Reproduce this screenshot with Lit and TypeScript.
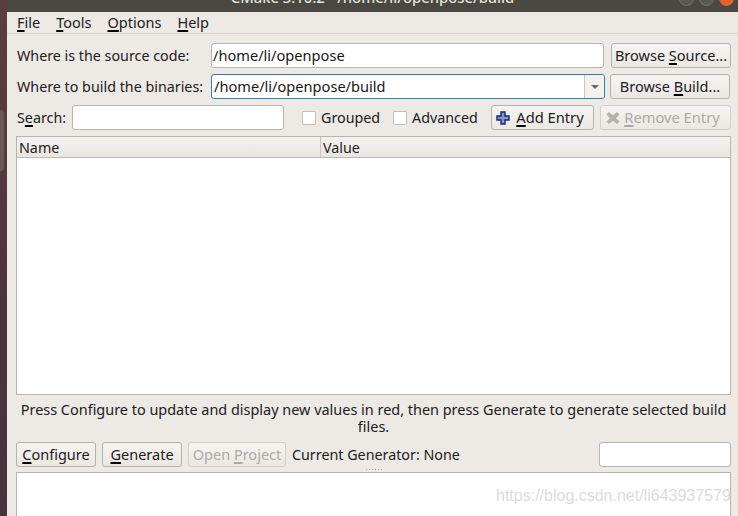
import { LitElement, html, css } from "lit";
import { customElement } from "lit/decorators.js";

@customElement("app-root")
export class AppRoot extends LitElement {
  static styles = css`
    :host {
      display: flex;
      width: 738px;
      height: 516px;
      overflow: hidden;
      font-family: "Noto Sans", "DejaVu Sans", sans-serif;
      font-size: 14.3px;
      color: #22201d;
      position: relative;
      background: #ede9e4;
    }
    .strip {
      width: 7px;
      flex: none;
      background: linear-gradient(#5c3d40 0, #54393e 170px, #4a353a 300px, #47343c 100%);
    }
    .strip div {
      width: 4px;
      height: 61px;
      margin-top: 110px;
      background: #6b5658;
      border-radius: 0 3px 3px 0;
    }
    .win {
      flex: 1;
      min-width: 0;
      display: flex;
      flex-direction: column;
      background: #ede9e4;
    }
    .title {
      height: 12px;
      flex: none;
      background: #4a4842;
      color: #e4e1dc;
      font-weight: 500;
      font-size: 14.8px;
      overflow: hidden;
      position: relative;
      text-align: center;
      line-height: 20px;
    }
    .title span {
      display: block;
      margin-top: -13px;
    }
    .wbtns {
      position: absolute;
      right: 4px;
      top: -9px;
      display: flex;
      gap: 5px;
    }
    .wbtns i {
      box-sizing: border-box;
      width: 15px;
      height: 15px;
      border-radius: 50%;
      background: #5a5853;
      border: 1px solid #75736e;
      display: block;
    }
    .wbtns i.close {
      background: #e0622d;
      border-color: #e0622d;
    }
    .menu {
      flex: none;
      display: flex;
      align-items: center;
      gap: 16px;
      padding: 0 0 2px 10px;
      box-sizing: content-box;
      height: 19px;
      font-size: 14.5px;
      border-bottom: 1px solid #d5d1cb;
    }
    u {
      text-decoration-thickness: 2px;
      text-underline-offset: 2px;
      text-decoration-skip-ink: none;
      text-decoration-color: #000;
    }
    .body {
      flex: 1;
      min-height: 0;
      display: flex;
      flex-direction: column;
      padding: 9px 7px 0 9px;
    }
    .row {
      display: flex;
      align-items: center;
      height: 25px;
      flex: none;
    }
    .r1 {
      margin-bottom: 6px;
    }
    .r2 {
      margin-bottom: 6px;
    }
    .t {
      white-space: nowrap;
      flex: none;
      padding-bottom: 1px;
    }
    .lbl {
      width: 195px;
      padding-left: 1px;
      box-sizing: border-box;
    }
    .input {
      box-sizing: border-box;
      height: 25px;
      background: #fff;
      border: 1px solid #b8b4ae;
      border-radius: 3px;
      display: flex;
      align-items: center;
      padding-left: 1px;
      color: #1a1917;
      font-size: 14.6px;
      white-space: nowrap;
    }
    .input span {
      padding-bottom: 1px;
    }
    .grow {
      flex: 1;
      min-width: 0;
    }
    .focus {
      border-color: #2f7fb0;
      padding-left: 2px;
    }
    .input .arrow {
      margin-left: auto;
      padding: 0;
      width: 19px;
      height: 100%;
      flex: none;
      border-left: 1px solid #c9c5bf;
      background: #f3f1ee;
      display: flex;
      align-items: center;
      justify-content: center;
      border-radius: 0 2px 2px 0;
    }
    .arrow::after {
      content: "";
      border-left: 4px solid transparent;
      border-right: 4px solid transparent;
      border-top: 4px solid #6c6a66;
    }
    .btn {
      box-sizing: border-box;
      height: 25px;
      flex: none;
      border: 1px solid #b5b1ab;
      border-radius: 3px;
      background: linear-gradient(#f6f4f2, #ebe8e3);
      display: flex;
      align-items: center;
      justify-content: center;
      gap: 5px;
      color: #22201d;
      font-size: 14.5px;
      white-space: nowrap;
    }
    .btn span {
      padding-bottom: 1px;
    }
    .btn.off {
      color: #adaaa5;
      border-color: #d2cec8;
    }
    .btn.off u {
      text-decoration-color: #adaaa5;
    }
    .w120 {
      width: 120px;
    }
    .w80 {
      width: 80px;
      margin-right: 6px;
    }
    .check {
      width: 14px;
      height: 14px;
      box-sizing: border-box;
      background: #fff;
      border: 1px solid #c2beb8;
      border-radius: 1px;
      flex: none;
      margin-right: 5px;
    }
    .table {
      box-sizing: border-box;
      height: 259px;
      margin-top: 6px;
      flex: none;
      background: #fff;
      border: 1px solid #b8b4ae;
      display: flex;
      flex-direction: column;
    }
    .thead {
      height: 20px;
      flex: none;
      display: flex;
      background: linear-gradient(#f4f2f0, #e9e6e1);
      border-bottom: 1px solid #bdb9b3;
    }
    .th {
      padding-left: 2px;
      line-height: 21px;
    }
    .th.name {
      width: 301px;
      border-right: 1px solid #c9c5bf;
    }
    .note {
      flex: none;
      height: 47px;
      box-sizing: border-box;
      padding-top: 6px;
      text-align: center;
      line-height: 17px;
      font-size: 14.45px;
    }
    .output {
      box-sizing: border-box;
      height: 60px;
      flex: none;
      background: #fff;
      border: 1px solid #b8b4ae;
      margin-top: 5px;
    }
    .grip {
      position: absolute;
      left: 366px;
      top: 469px;
      width: 17px;
      height: 1px;
      background: repeating-linear-gradient(90deg, #b5b1ab 0 1px, transparent 1px 3px);
    }
    .mark {
      position: absolute;
      left: 496px;
      top: 487px;
      font-family: "Liberation Sans", sans-serif;
      font-size: 16px;
      color: #dcdcdc;
      white-space: nowrap;
    }
    .m7 { margin-right: 7px; }
    .m5 { margin-right: 5px; }
    .m1 { margin-right: 1px; }
    .search { width: 56px; padding-left: 1px; box-sizing: border-box; }
    .sinput { width: 212px; margin-right: 18px; }
    .grouped { width: 72px; }
    .advanced { width: 79px; }
    .add { width: 103px; margin-right: 6px; font-size: 14.7px; gap: 6px; padding-right: 5px; }
    .remove { width: 131px; font-size: 14.7px; gap: 4px; padding-right: 5px; }
    .open { width: 98px; margin-right: 6px; }
    .gen-input { width: 132px; margin-left: auto; }
  `;

  render() {
    return html`
      <div class="strip"><div></div></div>
      <div class="win">
        <div class="title">
          <span>CMake 3.10.2 - /home/li/openpose/build</span>
          <div class="wbtns"><i></i><i></i><i class="close"></i></div>
        </div>
        <div class="menu">
          <span><u>F</u>ile</span><span><u>T</u>ools</span><span><u>O</u>ptions</span><span><u>H</u>elp</span>
        </div>
        <div class="body">
          <div class="row r1">
            <span class="t lbl">Where is the source code:</span>
            <div class="input grow m7"><span>/home/li/openpose</span></div>
            <div class="btn w120"><span>Browse <u>S</u>ource...</span></div>
          </div>
          <div class="row r2">
            <span class="t lbl">Where to build the binaries:</span>
            <div class="input grow focus m5">
              <span>/home/li/openpose/build</span>
              <span class="arrow"></span>
            </div>
            <div class="btn w120 m1"><span>Browse <u>B</u>uild...</span></div>
          </div>
          <div class="row">
            <span class="t search">S<u>e</u>arch:</span>
            <div class="input sinput"></div>
            <span class="check"></span>
            <span class="t grouped">Grouped</span>
            <span class="check"></span>
            <span class="t advanced">Advanced</span>
            <div class="btn add">
              <svg width="14" height="14" viewBox="0 0 14 14">
                <path d="M5 1h4v4h4v4H9v4H5V9H1V5h4z" fill="#7f96d6" stroke="#16266e" stroke-width="1.400"></path>
              </svg>
              <span><u>A</u>dd Entry</span>
            </div>
            <div class="btn off remove">
              <svg width="14" height="14" viewBox="0 0 14 14">
                <path d="M3 1l4 3.200L11 1l2.500 2.500L10 7l3.500 3.500L11 13 7 9.800 3 13 .5 10.500 4 7 .5 3.500z" fill="#b5b2ad"></path>
              </svg>
              <span><u>R</u>emove Entry</span>
            </div>
          </div>
          <div class="table">
            <div class="thead">
              <div class="th name">Name</div>
              <div class="th">Value</div>
            </div>
          </div>
          <div class="note">Press Configure to update and display new values in red, then press Generate to generate selected build files.</div>
          <div class="row">
            <div class="btn w80"><span><u>C</u>onfigure</span></div>
            <div class="btn w80"><span><u>G</u>enerate</span></div>
            <div class="btn off open"><span>Open <u>P</u>roject</span></div>
            <span class="t">Current Generator: None</span>
            <div class="input gen-input"></div>
          </div>
          <div class="output"></div>
        </div>
      </div>
      <div class="grip"></div>
      <div class="mark">https://blog.csdn.net/li643937579</div>
    `;
  }
}
